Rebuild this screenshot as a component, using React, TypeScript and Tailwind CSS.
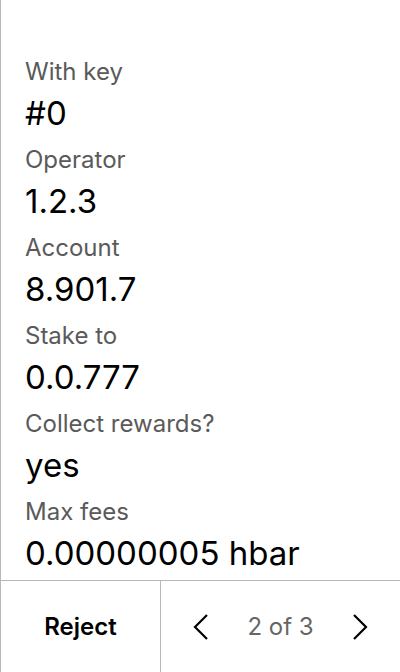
const fields = [
  { label: 'With key', value: '#0' },
  { label: 'Operator', value: '1.2.3' },
  { label: 'Account', value: '8.901.7' },
  { label: 'Stake to', value: '0.0.777' },
  { label: 'Collect rewards?', value: 'yes' },
  { label: 'Max fees', value: '0.00000005 hbar' },
]

export default function App() {
  return (
    <div className="flex h-[672px] w-[400px] flex-col border-l border-[#b8b8b8] bg-white font-['Inter',sans-serif]">
      <div className="min-h-0 flex-1 overflow-hidden px-6 pt-[56px]">
        {fields.map((f) => (
          <div key={f.label} className="pb-[6px]">
            <p className="text-[24px] leading-[32px] text-[#5a5a5a]">{f.label}</p>
            <p className="text-[33px] leading-[50px] text-black">{f.value}</p>
          </div>
        ))}
      </div>
      <div className="flex h-[92px] shrink-0 border-t border-[#b8b8b8]">
        <button className="flex w-[159px] items-center justify-center text-[24px] font-semibold text-black">
          Reject
        </button>
        <div className="flex flex-1 items-center justify-between border-l border-[#b8b8b8] px-8">
          <svg width="16" height="26" viewBox="0 0 16 26" fill="none" stroke="black" strokeWidth="2.2">
            <path d="M14 1 L2 13 L14 25" />
          </svg>
          <span className="text-[24px] text-[#666]">2 of 3</span>
          <svg width="16" height="26" viewBox="0 0 16 26" fill="none" stroke="black" strokeWidth="2.2">
            <path d="M2 1 L14 13 L2 25" />
          </svg>
        </div>
      </div>
    </div>
  )
}
